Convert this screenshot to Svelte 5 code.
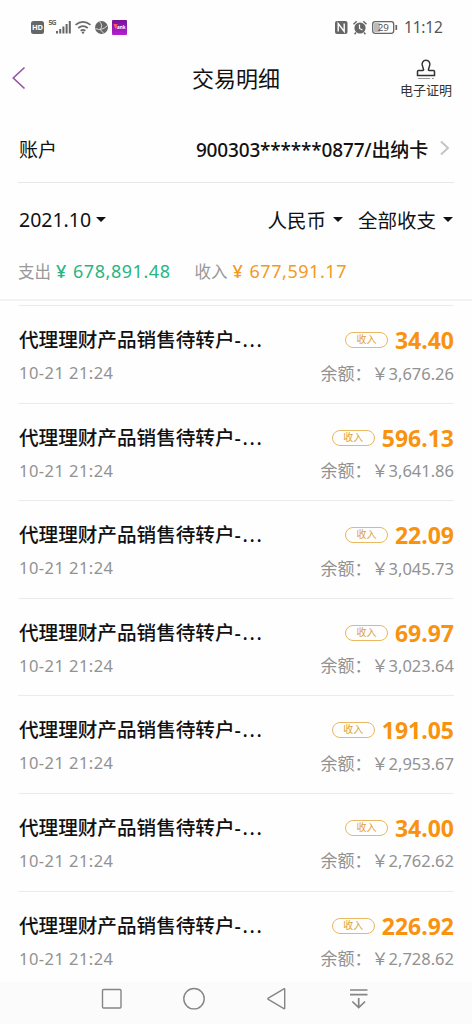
<script lang="ts">
  type Entry = { amount: string; balance: string }

  const title = '代理理财产品销售待转户'
  const time = '10-21 21:24'

  const entries: Entry[] = [
    { amount: '34.40', balance: '3,676.26' },
    { amount: '596.13', balance: '3,641.86' },
    { amount: '22.09', balance: '3,045.73' },
    { amount: '69.97', balance: '3,023.64' },
    { amount: '191.05', balance: '2,953.67' },
    { amount: '34.00', balance: '2,762.62' },
    { amount: '226.92', balance: '2,728.62' },
  ]
</script>

<div class="screen">
  <div class="status">
    <svg class="status-left" width="100" height="20" viewBox="0 0 100 20">
      <rect x="1" y="4" width="13" height="13" rx="2.5" fill="#666" />
      <text x="7.5" y="13.2" font-size="7.5" font-weight="700" text-anchor="middle" fill="#fff">HD</text>
      <text x="18.5" y="8" font-size="7" font-weight="700" fill="#666" textLength="8">5G</text>
      <g fill="#666">
        <rect x="26" y="14" width="2" height="2.5" />
        <rect x="29.2" y="12" width="2" height="4.5" />
        <rect x="32.4" y="9.5" width="2" height="7" />
        <rect x="35.6" y="7" width="2" height="9.5" />
        <rect x="38.8" y="4" width="2" height="12.5" />
      </g>
      <g fill="none" stroke="#6a6a6a" stroke-width="1.7">
        <path d="M45.5 7.8q7.5-6 15 0M48.2 11q4.8-3.8 9.6 0M50.6 13.8q2.4-1.8 4.8 0" />
      </g>
      <circle cx="53" cy="15.6" r="1.2" fill="#6a6a6a" />
      <circle cx="71.5" cy="10.5" r="6.5" fill="#666" />
      <path d="M69.500 4.500q4 4 .5 8.500M65.500 11.500q6 3 12-3M70 12.500l4 4" fill="none" stroke="#ddd" stroke-width="1" />
      <defs>
        <linearGradient id="purple" x1="0" y1="0" x2="0" y2="1">
          <stop offset="0" stop-color="#75149a" />
          <stop offset="1" stop-color="#b51fd0" />
        </linearGradient>
      </defs>
      <rect x="82" y="3" width="15" height="15" rx="1" fill="url(#purple)" />
      <path d="M83.5 7h4l-1 4.5h-1.5z" fill="#ff5a5a" />
      <text x="87" y="12.3" font-size="6" font-weight="700" fill="#fff" textLength="8.5" lengthAdjust="spacingAndGlyphs">ank</text>
    </svg>
    <svg class="status-right" width="66" height="20" viewBox="0 0 66 20">
      <rect x="1" y="4" width="12.5" height="13" rx="2" fill="#666" />
      <path d="M4.2 14.5V6.5l6 8V6.5" fill="none" stroke="#fff" stroke-width="1.4" />
      <circle cx="26" cy="11" r="5.6" fill="#666" />
      <path d="M19.5 7.3l3.2-3M32.5 7.3l-3.2-3M22 15.5l-1.4 1.7M30 15.5l1.4 1.7" stroke="#666" stroke-width="1.5" />
      <path d="M25.5 7.5v4l3 1.5" fill="none" stroke="#fff" stroke-width="1.2" />
      <rect x="38.7" y="4.7" width="21" height="11.6" rx="2.5" fill="none" stroke="#666" stroke-width="1.3" />
      <rect x="40" y="6" width="6" height="9" rx="1" fill="#bbb" />
      <path d="M62.3 8v5" stroke="#666" stroke-width="1.7" />
      <text x="49.3" y="14" font-size="9.8" text-anchor="middle" fill="#555">29</text>
    </svg>
    <span class="clock">11:12</span>
  </div>

  <header>
    <svg class="back" width="16" height="24" viewBox="0 0 16 24" fill="none" stroke="#935aa5" stroke-width="1.7">
      <path d="M13.5 1.5L2.3 12l11.2 10.5" />
    </svg>
    <h1>交易明细</h1>
    <div class="proof">
      <svg width="20" height="21" viewBox="0 0 20 21" fill="none" stroke="#333" stroke-width="1.5">
        <path d="M1.500 16.500v-4q0-1 1-1h4.200q1.200 0 .8-1.200L6.600 7.400C5 4 7.200 1.200 10 1.200S15 4 13.400 7.400l-.9 2.900q-.4 1.200.8 1.200h4.200q1 0 1 1v4z" />
        <path d="M2 19.500h12M16 19.500h2" stroke="#999" stroke-width="1" />
      </svg>
      <span>电子证明</span>
    </div>
  </header>

  <div class="account">
    <span class="label">账户</span>
    <span class="number">900303******0877/出纳卡</span>
    <svg width="12" height="18" viewBox="0 0 12 18" fill="none" stroke="#c4c4c4" stroke-width="2">
      <path d="M2 2.5L9 9l-7 6.5" />
    </svg>
  </div>

  <div class="filters">
    <span class="month">2021.10</span><i class="caret"></i>
    <span class="currency">人民币</span><i class="caret"></i>
    <span class="kind">全部收支</span><i class="caret"></i>
  </div>

  <div class="totals">
    <span class="name">支出</span>
    <span class="sum out"><b>¥</b>678,891.48</span>
    <span class="name second">收入</span>
    <span class="sum in"><b>¥</b>677,591.17</span>
  </div>

  <main>
    {#each entries as entry}
      <section>
        <div class="line">
          <span class="title">{title}<span class="more">-...</span></span>
          <span class="tag">收入</span>
          <span class="amount">{entry.amount}</span>
        </div>
        <div class="line sub">
          <span class="time">{time}</span>
          <span class="balance"><span class="cjk">余额：￥</span>{entry.balance}</span>
        </div>
      </section>
    {/each}
  </main>

  <nav>
    <svg width="472" height="42" viewBox="0 0 472 42" fill="none" stroke="#858585" stroke-width="1.4">
      <rect x="102.5" y="7.5" width="18.5" height="18.5" rx="1" />
      <circle cx="194" cy="16.7" r="10.2" />
      <path d="M284.7 7.2v19q0 .8-.8.4l-15.600-9.200q-.9-.6 0-1.200L283.900 6.800q.8-.4.8.4z" />
      <path d="M350 8h17.500M350 12.700h17.500M358.700 16v9.500M352.300 19.500l6.400 6 6.400-6" stroke-width="1.7" />
    </svg>
  </nav>
</div>

<style>
  :global(body) {
    background: #fefefe;
  }

  .screen {
    width: 472px;
    height: 1024px;
    overflow: hidden;
    display: flex;
    flex-direction: column;
    background: #fefefe;
    color: #111;
    font-family: 'Noto Sans', 'Noto Sans CJK SC', sans-serif;
    white-space: nowrap;
  }

  .status {
    height: 50px;
    flex: none;
    display: flex;
    align-items: center;
    box-sizing: border-box;
    padding: 4px 31px 0 30px;
  }

  .status-right {
    margin-left: auto;
  }

  .clock {
    width: 37px;
    margin-left: 4px;
    font-size: 15.5px;
    color: #555;
    letter-spacing: -0.2px;
  }

  header {
    height: 58px;
    flex: none;
    display: grid;
    grid-template-columns: 100px 1fr 100px;
    align-items: center;
  }

  .back {
    margin: -3px 0 0 11px;
  }

  h1 {
    margin: -4px 0 0;
    text-align: center;
    font: 400 22px 'Noto Sans CJK SC', sans-serif;
  }

  .proof {
    justify-self: end;
    width: 52px;
    margin: -1px 20px 0 0;
    display: flex;
    flex-direction: column;
    align-items: center;
    gap: 1px;
    font: 400 13px/18px 'Noto Sans CJK SC', sans-serif;
    color: #333;
  }

  .account {
    height: 75px;
    flex: none;
    box-sizing: border-box;
    margin: 0 18px;
    padding: 6px 0 0 1px;
    border-bottom: 1px solid #e8e8e8;
    display: flex;
    align-items: flex-start;
    font-size: 19px;
    line-height: 72px;
  }

  .label,
  .number {
    height: 68px;
  }

  .number {
    margin-left: auto;
    font-weight: 500;
    letter-spacing: -0.17px;
  }

  .account svg {
    margin: 25px 3px 0 11px;
  }

  .filters {
    height: 72px;
    flex: none;
    display: flex;
    align-items: center;
    padding: 0 19px;
    font-size: 19.5px;
  }

  .caret {
    margin-left: 7px;
    border: 5px solid transparent;
    border-top: 5.5px solid #111;
    border-bottom: 0;
  }

  .month {
    margin-right: -2px;
  }

  .currency {
    margin-left: auto;
  }

  .kind {
    margin-left: 15px;
  }

  .totals {
    height: 46px;
    flex: none;
    box-sizing: border-box;
    padding: 0 18px 13px;
    border-bottom: 2px solid #f2f2f2;
    display: flex;
    align-items: center;
    font-size: 18px;
  }

  .name {
    width: 38px;
    font-size: 16.5px;
    color: #999;
  }

  .second {
    margin-left: 24px;
  }

  .sum {
    letter-spacing: 0.55px;
  }

  .sum b {
    display: inline-block;
    width: 17px;
    font-weight: 500;
  }

  .out {
    color: #29b583;
  }

  .in {
    color: #f39a23;
  }

  main {
    flex: 1;
    min-height: 0;
    overflow: hidden;
    padding: 4px 18px 0;
  }

  section {
    height: 97.6px;
    box-sizing: border-box;
    border-top: 1px solid #ebebeb;
    padding: 16px 0 0 1px;
  }

  .line {
    height: 36px;
    display: flex;
    align-items: center;
    line-height: 36px;
  }

  .title {
    flex: 1;
    font-size: 19.6px;
    font-weight: 500;
  }

  .more {
    letter-spacing: 1.7px;
  }

  .tag {
    width: 41px;
    height: 14px;
    margin-right: 7px;
    border: 1px solid #e9b860;
    border-radius: 8px;
    text-align: center;
    font-size: 10px;
    line-height: 13px;
    color: #dda038;
  }

  .amount {
    font-size: 23px;
    font-weight: 700;
    color: #f9920e;
  }

  .sub {
    height: 30px;
    line-height: 30px;
    justify-content: space-between;
    font-size: 16.5px;
    color: #929292;
  }

  .time {
    letter-spacing: 0.45px;
  }

  .cjk {
    font: 400 17px/30px 'Noto Sans CJK SC', sans-serif;
  }

  nav {
    height: 42px;
    flex: none;
    background: #fbfbfb;
  }

  nav svg {
    display: block;
  }
</style>
